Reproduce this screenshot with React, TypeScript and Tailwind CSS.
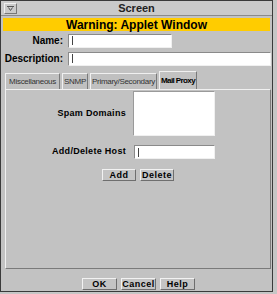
import React from 'react';

const font = { fontFamily: '"Liberation Sans", Arial, sans-serif' };

const Field = ({ width }: { width: string }) => (
  <div className={`h-[14px] ${width} bg-white border border-[#8a8a8a] border-r-[#f0f0f0] border-b-[#f0f0f0] flex items-center pl-[3px]`}>
    <span className="w-px h-[9px] bg-[#444]" />
  </div>
);

const Btn = ({ label, w }: { label: string; w: string }) => (
  <button
    className={`${w} h-[12px] flex items-center justify-center bg-[#c4c4c4] border border-[#f2f2f2] border-r-[#6e6e6e] border-b-[#6e6e6e] text-[9px] font-bold tracking-[0.5px] text-black leading-none`}
  >
    {label}
  </button>
);

const tabs = [
  { label: 'Miscellaneous', w: 'w-[55px]' },
  { label: 'SNMP', w: 'w-[26px]' },
  { label: 'Primary/Secondary', w: 'w-[67px]' },
  { label: 'Mail Proxy', w: 'w-[38px]' },
];

export default function App() {
  const [active, setActive] = React.useState(3);
  return (
    <div style={font} className="w-[277px] h-[294px] bg-[#c6c6c6] relative overflow-hidden">
      <div className="w-[273px] h-[292px] border border-[#3a3a3a] bg-[#c2c2c2] flex flex-col">
        {/* title bar */}
        <div className="h-[15px] flex items-center border-b border-[#8a8a8a] bg-[#cacaca] relative">
          <div className="ml-[3px] w-[13px] h-[11px] border border-[#f0f0f0] border-r-[#777] border-b-[#777] flex items-center justify-center">
            <svg width="7" height="5" viewBox="0 0 7 5">
              <path d="M0 0.5H7M1.5 1.5L3.5 4.5L5.5 1.5" stroke="#555" fill="none" strokeWidth="1" />
            </svg>
          </div>
          <span className="absolute left-0 right-0 text-center text-[11px] font-bold text-[#222] leading-none">Screen</span>
        </div>

        {/* applet warning */}
        <div className="mt-[2px] mx-[2px] h-[13px] bg-[#ffcc00] flex items-center justify-center">
          <span className="text-[12px] font-bold text-black leading-none">Warning: Applet Window</span>
        </div>

        {/* name / description */}
        <div className="mt-[2px] flex flex-col gap-[3px]">
          <div className="flex items-center">
            <span className="w-[63px] text-right text-[10px] font-bold pr-[1px]">Name:</span>
            <div className="ml-[4px]">
              <Field width="w-[104px]" />
            </div>
          </div>
          <div className="flex items-center">
            <span className="w-[63px] text-right text-[10px] font-bold pr-[1px]">Description:</span>
            <div className="ml-[4px]">
              <Field width="w-[203px]" />
            </div>
          </div>
        </div>

        {/* tabs */}
        <div className="mt-[5px] ml-[4px] flex items-end h-[18px]">
          {tabs.map((t, i) => (
            <div
              key={t.label}
              onClick={() => setActive(i)}
              className={`${t.w} mr-[2px] flex items-center justify-center whitespace-nowrap border border-b-0 border-[#f0f0f0] border-r-[#7a7a7a] text-[8px] leading-none ${
                i === active
                  ? 'h-[18px] font-bold text-black bg-[#c2c2c2] tracking-[-0.6px]'
                  : 'h-[16px] text-[#333] bg-[#c0c0c0] tracking-[-0.3px]'
              }`}
            >
              {t.label}
            </div>
          ))}
        </div>

        {/* tab panel */}
        <div className="ml-[4px] w-[266px] h-[180px] border border-[#f0f0f0] border-r-[#7a7a7a] border-b-[#7a7a7a] flex flex-col">
          <div className="mt-[1px] flex items-center">
            <span className="w-[120px] text-right text-[9px] font-bold tracking-[0.3px]">Spam Domains</span>
            <div className="ml-[7px] w-[82px] h-[45px] bg-white border border-[#9a9a9a] border-r-[#f0f0f0] border-b-[#f0f0f0]" />
          </div>
          <div className="mt-[9px] flex items-center">
            <span className="w-[120px] text-right text-[9px] font-bold tracking-[0.3px]">Add/Delete Host</span>
            <div className="ml-[8px]">
              <Field width="w-[81px]" />
            </div>
          </div>
          <div className="mt-[10px] flex justify-center gap-[4px]">
            <Btn label="Add" w="w-[34px]" />
            <Btn label="Delete" w="w-[34px]" />
          </div>
        </div>

        {/* dialog buttons */}
        <div className="mt-[9px] flex justify-center gap-[4px] pl-[4px]">
          <Btn label="OK" w="w-[35px]" />
          <Btn label="Cancel" w="w-[35px]" />
          <Btn label="Help" w="w-[35px]" />
        </div>
      </div>
    </div>
  );
}
